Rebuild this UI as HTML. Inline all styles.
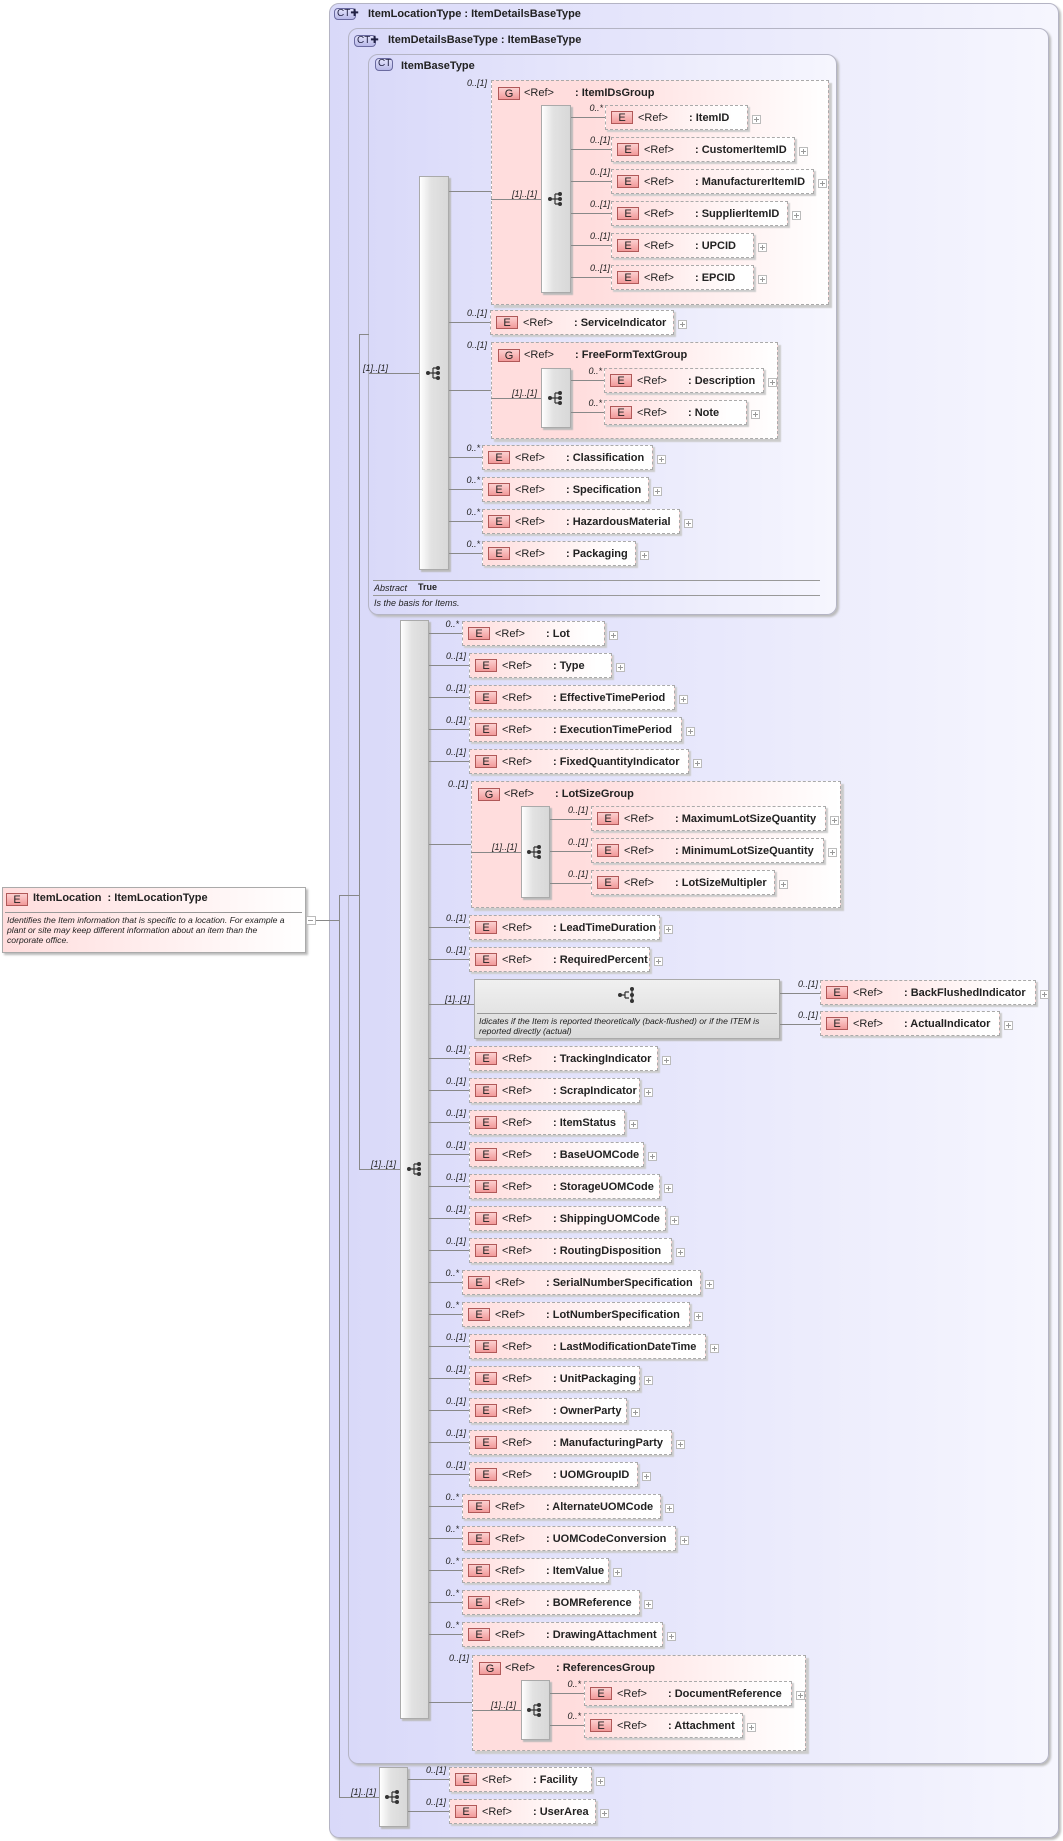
<!DOCTYPE html>
<html><head><meta charset="utf-8"><style>
*{box-sizing:border-box}
body{margin:0;width:1063px;height:1841px;background:#fff;position:relative;overflow:hidden;font-family:"Liberation Sans",sans-serif;color:#222}
div,span,b,i{position:absolute}
.bx{border:1px solid #b4b4c4;border-radius:10px;background:linear-gradient(to right,#d9d9f9,#f6f6fe);box-shadow:2px 2px 2px #bbb}
.hd{font:bold 11px "Liberation Sans",sans-serif;white-space:nowrap;color:#222}
.ct{height:12px;border:1px solid #6a6aa0;border-radius:4px;background:linear-gradient(#e4e4fc,#b8b8e8);font:10px "Liberation Sans",sans-serif;line-height:10px;padding-left:2px;color:#224}
.el{height:25px;border:1px dashed #aaa;background:linear-gradient(to right,#fdd,#fff 90%);box-shadow:2px 2px 1px #ccc;font:bold 11px "Liberation Sans",sans-serif;white-space:nowrap}
.E{left:5px;top:5px;width:22px;height:13px;border:1px solid #b05858;background:linear-gradient(#fcd0d0,#f29a9a);font:11px "Liberation Sans",sans-serif;line-height:12px;text-align:center;color:#222}
.r{left:32px;top:6px;font-weight:normal}
.n{left:83px;top:6px}
.p{right:-14px;top:9px;width:9px;height:9px;border:1px solid #bbb;background:#fff}
.p:before{content:"";position:absolute;left:1px;top:3px;width:5px;height:1px;background:#999}
.p:after{content:"";position:absolute;left:3px;top:1px;width:1px;height:5px;background:#999}
.gr{border:1px dashed #aaa;background:linear-gradient(to right,#fdd 30%,#fff);box-shadow:3px 3px 1px #ccc;font:bold 11px "Liberation Sans",sans-serif;white-space:nowrap}
.gr .E{left:6px;top:6px}
.gr .r{top:6px}
.gr .n{top:6px}
.bar{border:1px solid #aaa;background:linear-gradient(to right,#fff,#e2e2e2 40%,#d8d8d8);box-shadow:2px 2px 1px #bbb}
.m{width:34px;text-align:right;font:italic 9px "Liberation Sans",sans-serif;color:#222;white-space:nowrap}
.h{height:1px;background:#888}
.v{width:1px;background:#888}
.ic{width:16px;height:16px}
</style></head><body>

<!-- Outer boxes -->
<div class="bx" style="left:329px;top:3px;width:730px;height:1835px"></div>
<span class="ct" style="left:334px;top:8px;width:22px">CT✚</span>
<span class="hd" style="left:368px;top:8px">ItemLocationType : ItemDetailsBaseType</span>

<div class="bx" style="left:348px;top:28px;width:701px;height:1736px"></div>
<span class="ct" style="left:354px;top:35px;width:22px">CT✚</span>
<span class="hd" style="left:388px;top:34px">ItemDetailsBaseType : ItemBaseType</span>

<div class="bx" style="left:368px;top:54px;width:469px;height:561px"></div>
<span class="ct" style="left:375px;top:58px;width:18px;height:13px">CT</span>
<span class="hd" style="left:401px;top:60px">ItemBaseType</span>
<div class="h" style="left:373px;top:580px;width:447px;background:#999"></div>
<span style="left:374px;top:583px;font:italic 9px 'Liberation Sans',sans-serif">Abstract</span>
<span style="left:418px;top:582px;font:bold 9px 'Liberation Sans',sans-serif">True</span>
<div class="h" style="left:373px;top:595px;width:447px;background:#999"></div>
<span style="left:374px;top:598px;font:italic 9px 'Liberation Sans',sans-serif">Is the basis for Items.</span>

<!-- Left ItemLocation -->
<div style="left:2px;top:887px;width:304px;height:66px;border:1px solid #aaa;background:linear-gradient(to right,#fdd,#fff);box-shadow:2px 2px 2px #bbb"></div>
<b class="E" style="left:6px;top:893px">E</b>
<span class="hd" style="left:33px;top:892px">ItemLocation&nbsp; : ItemLocationType</span>
<div class="h" style="left:5px;top:912px;width:297px;background:#999"></div>
<span style="left:7px;top:915px;font:italic 8.6px/10px 'Liberation Sans',sans-serif;white-space:nowrap">Identifies the Item information that is specific to a location. For example a<br>plant or site may keep different information about an item than the<br>corporate office.</span>
<span style="left:306px;top:916px;width:10px;height:9px;border:1px solid #bbb;background:#fff"></span>
<div class="h" style="left:308px;top:920px;width:5px;background:#999"></div>

<!-- main connectors -->
<div class="h" style="left:316px;top:920px;width:24px"></div>
<div class="v" style="left:339px;top:895px;height:903px"></div>
<div class="h" style="left:339px;top:895px;width:20px"></div>
<div class="v" style="left:359px;top:334px;height:836px"></div>
<div class="h" style="left:359px;top:334px;width:10px"></div>
<div class="h" style="left:369px;top:373px;width:50px"></div>
<div class="m" style="left:354px;top:363px">[1]..[1]</div>
<div class="h" style="left:359px;top:1169px;width:41px"></div>
<div class="m" style="left:362px;top:1159px">[1]..[1]</div>
<div class="h" style="left:339px;top:1797px;width:40px"></div>
<div class="m" style="left:342px;top:1787px">[1]..[1]</div>

<svg width="0" height="0" style="position:absolute"><defs>
<g id="sq"><circle cx="2" cy="8" r="2" fill="#333"/><path d="M2 8H7M7 3V13M7 3H12M7 8H12M7 13H12" stroke="#333" stroke-width="1.2" fill="none"/><circle cx="12" cy="3" r="2" fill="#333"/><circle cx="12" cy="8" r="2" fill="#333"/><circle cx="12" cy="13" r="2" fill="#333"/></g>
<g id="ch"><circle cx="2" cy="8" r="2" fill="#333"/><path d="M2 8H7M7 5V11M7 5H11M7 11H11" stroke="#333" stroke-width="1.2" fill="none"/><circle cx="14" cy="2" r="2" fill="#333"/><circle cx="14" cy="8" r="2" fill="#333"/><circle cx="14" cy="14" r="2" fill="#333"/><path d="M14 2V14" stroke="#333" stroke-width="1.2"/></g>
</defs></svg>

<!-- Box3 main bar -->
<div class="bar" style="left:419px;top:176px;width:30px;height:394px"></div>
<svg class="ic" style="position:absolute;left:426px;top:365px" width="16" height="16"><use href="#sq"/></svg>

<!-- ItemIDsGroup -->
<div class="h" style="left:449px;top:191px;width:42px"></div>
<div class="m" style="left:453px;top:78px">0..[1]</div>
<div class="gr" style="left:491px;top:80px;width:338px;height:225px"><b class="E">G</b><span class="r">&lt;Ref&gt;</span><span class="n">: ItemIDsGroup</span></div>
<div class="h" style="left:491px;top:199px;width:50px"></div>
<div class="m" style="left:503px;top:189px">[1]..[1]</div>
<div class="bar" style="left:541px;top:105px;width:30px;height:188px"></div>
<svg class="ic" style="position:absolute;left:548px;top:191px" width="16" height="16"><use href="#sq"/></svg>

<div class="h" style="left:571px;top:117px;width:34px"></div><div class="m" style="left:569px;top:103px">0..*</div>
<div class="el" style="left:605px;top:105px;width:143px"><b class="E">E</b><span class="r">&lt;Ref&gt;</span><span class="n">: ItemID</span><i class="p"></i></div>
<div class="h" style="left:571px;top:149px;width:40px"></div><div class="m" style="left:576px;top:135px">0..[1]</div>
<div class="el" style="left:611px;top:137px;width:184px"><b class="E">E</b><span class="r">&lt;Ref&gt;</span><span class="n">: CustomerItemID</span><i class="p"></i></div>
<div class="h" style="left:571px;top:181px;width:40px"></div><div class="m" style="left:576px;top:167px">0..[1]</div>
<div class="el" style="left:611px;top:169px;width:203px"><b class="E">E</b><span class="r">&lt;Ref&gt;</span><span class="n">: ManufacturerItemID</span><i class="p"></i></div>
<div class="h" style="left:571px;top:213px;width:40px"></div><div class="m" style="left:576px;top:199px">0..[1]</div>
<div class="el" style="left:611px;top:201px;width:177px"><b class="E">E</b><span class="r">&lt;Ref&gt;</span><span class="n">: SupplierItemID</span><i class="p"></i></div>
<div class="h" style="left:571px;top:245px;width:40px"></div><div class="m" style="left:576px;top:231px">0..[1]</div>
<div class="el" style="left:611px;top:233px;width:143px"><b class="E">E</b><span class="r">&lt;Ref&gt;</span><span class="n">: UPCID</span><i class="p"></i></div>
<div class="h" style="left:571px;top:277px;width:40px"></div><div class="m" style="left:576px;top:263px">0..[1]</div>
<div class="el" style="left:611px;top:265px;width:143px"><b class="E">E</b><span class="r">&lt;Ref&gt;</span><span class="n">: EPCID</span><i class="p"></i></div>

<div class="h" style="left:449px;top:322px;width:41px"></div><div class="m" style="left:453px;top:308px">0..[1]</div>
<div class="el" style="left:490px;top:310px;width:184px"><b class="E">E</b><span class="r">&lt;Ref&gt;</span><span class="n">: ServiceIndicator</span><i class="p"></i></div>

<!-- FreeFormTextGroup -->
<div class="h" style="left:449px;top:390px;width:42px"></div>
<div class="m" style="left:453px;top:340px">0..[1]</div>
<div class="gr" style="left:491px;top:342px;width:287px;height:97px"><b class="E">G</b><span class="r">&lt;Ref&gt;</span><span class="n">: FreeFormTextGroup</span></div>
<div class="h" style="left:491px;top:398px;width:50px"></div>
<div class="m" style="left:503px;top:388px">[1]..[1]</div>
<div class="bar" style="left:541px;top:368px;width:30px;height:60px"></div>
<svg class="ic" style="position:absolute;left:548px;top:390px" width="16" height="16"><use href="#sq"/></svg>
<div class="h" style="left:571px;top:380px;width:33px"></div><div class="m" style="left:568px;top:366px">0..*</div>
<div class="el" style="left:604px;top:368px;width:160px"><b class="E">E</b><span class="r">&lt;Ref&gt;</span><span class="n">: Description</span><i class="p"></i></div>
<div class="h" style="left:571px;top:412px;width:33px"></div><div class="m" style="left:568px;top:398px">0..*</div>
<div class="el" style="left:604px;top:400px;width:143px"><b class="E">E</b><span class="r">&lt;Ref&gt;</span><span class="n">: Note</span><i class="p"></i></div>

<div class="h" style="left:449px;top:457px;width:33px"></div><div class="m" style="left:446px;top:443px">0..*</div>
<div class="el" style="left:482px;top:445px;width:171px"><b class="E">E</b><span class="r">&lt;Ref&gt;</span><span class="n">: Classification</span><i class="p"></i></div>
<div class="h" style="left:449px;top:489px;width:33px"></div><div class="m" style="left:446px;top:475px">0..*</div>
<div class="el" style="left:482px;top:477px;width:167px"><b class="E">E</b><span class="r">&lt;Ref&gt;</span><span class="n">: Specification</span><i class="p"></i></div>
<div class="h" style="left:449px;top:521px;width:33px"></div><div class="m" style="left:446px;top:507px">0..*</div>
<div class="el" style="left:482px;top:509px;width:198px"><b class="E">E</b><span class="r">&lt;Ref&gt;</span><span class="n">: HazardousMaterial</span><i class="p"></i></div>
<div class="h" style="left:449px;top:553px;width:33px"></div><div class="m" style="left:446px;top:539px">0..*</div>
<div class="el" style="left:482px;top:541px;width:154px"><b class="E">E</b><span class="r">&lt;Ref&gt;</span><span class="n">: Packaging</span><i class="p"></i></div>

<!-- Lower main bar -->
<div class="bar" style="left:400px;top:620px;width:29px;height:1099px"></div>
<svg class="ic" style="position:absolute;left:407px;top:1161px" width="16" height="16"><use href="#sq"/></svg>

<div class="h" style="left:429px;top:633px;width:33px"></div><div class="m" style="left:425px;top:619px">0..*</div>
<div class="el" style="left:462px;top:621px;width:143px"><b class="E">E</b><span class="r">&lt;Ref&gt;</span><span class="n">: Lot</span><i class="p"></i></div>
<div class="h" style="left:429px;top:665px;width:40px"></div><div class="m" style="left:432px;top:651px">0..[1]</div>
<div class="el" style="left:469px;top:653px;width:143px"><b class="E">E</b><span class="r">&lt;Ref&gt;</span><span class="n">: Type</span><i class="p"></i></div>
<div class="h" style="left:429px;top:697px;width:40px"></div><div class="m" style="left:432px;top:683px">0..[1]</div>
<div class="el" style="left:469px;top:685px;width:206px"><b class="E">E</b><span class="r">&lt;Ref&gt;</span><span class="n">: EffectiveTimePeriod</span><i class="p"></i></div>
<div class="h" style="left:429px;top:729px;width:40px"></div><div class="m" style="left:432px;top:715px">0..[1]</div>
<div class="el" style="left:469px;top:717px;width:213px"><b class="E">E</b><span class="r">&lt;Ref&gt;</span><span class="n">: ExecutionTimePeriod</span><i class="p"></i></div>
<div class="h" style="left:429px;top:761px;width:40px"></div><div class="m" style="left:432px;top:747px">0..[1]</div>
<div class="el" style="left:469px;top:749px;width:220px"><b class="E">E</b><span class="r">&lt;Ref&gt;</span><span class="n">: FixedQuantityIndicator</span><i class="p"></i></div>

<!-- LotSizeGroup -->
<div class="h" style="left:429px;top:844px;width:42px"></div>
<div class="m" style="left:434px;top:779px">0..[1]</div>
<div class="gr" style="left:471px;top:781px;width:370px;height:127px"><b class="E">G</b><span class="r">&lt;Ref&gt;</span><span class="n">: LotSizeGroup</span></div>
<div class="h" style="left:471px;top:852px;width:50px"></div>
<div class="m" style="left:483px;top:842px">[1]..[1]</div>
<div class="bar" style="left:521px;top:806px;width:29px;height:92px"></div>
<svg class="ic" style="position:absolute;left:527px;top:844px" width="16" height="16"><use href="#sq"/></svg>
<div class="h" style="left:550px;top:819px;width:41px"></div><div class="m" style="left:554px;top:805px">0..[1]</div>
<div class="el" style="left:591px;top:806px;width:235px"><b class="E">E</b><span class="r">&lt;Ref&gt;</span><span class="n">: MaximumLotSizeQuantity</span><i class="p"></i></div>
<div class="h" style="left:550px;top:851px;width:41px"></div><div class="m" style="left:554px;top:837px">0..[1]</div>
<div class="el" style="left:591px;top:838px;width:233px"><b class="E">E</b><span class="r">&lt;Ref&gt;</span><span class="n">: MinimumLotSizeQuantity</span><i class="p"></i></div>
<div class="h" style="left:550px;top:883px;width:41px"></div><div class="m" style="left:554px;top:869px">0..[1]</div>
<div class="el" style="left:591px;top:870px;width:184px"><b class="E">E</b><span class="r">&lt;Ref&gt;</span><span class="n">: LotSizeMultipler</span><i class="p"></i></div>

<div class="h" style="left:429px;top:927px;width:40px"></div><div class="m" style="left:432px;top:913px">0..[1]</div>
<div class="el" style="left:469px;top:915px;width:191px"><b class="E">E</b><span class="r">&lt;Ref&gt;</span><span class="n">: LeadTimeDuration</span><i class="p"></i></div>
<div class="h" style="left:429px;top:959px;width:40px"></div><div class="m" style="left:432px;top:945px">0..[1]</div>
<div class="el" style="left:469px;top:947px;width:181px"><b class="E">E</b><span class="r">&lt;Ref&gt;</span><span class="n">: RequiredPercent</span><i class="p"></i></div>

<!-- choice -->
<div class="h" style="left:429px;top:1004px;width:45px"></div><div class="m" style="left:436px;top:994px">[1]..[1]</div>
<div style="left:474px;top:979px;width:306px;height:60px;border:1px solid #aaa;background:linear-gradient(#f0f0f0,#dadada);box-shadow:2px 2px 1px #bbb"></div>
<svg class="ic" style="position:absolute;left:618px;top:987px" width="17" height="17"><use href="#ch"/></svg>
<div class="h" style="left:477px;top:1013px;width:300px;background:#999"></div>
<span style="left:479px;top:1016px;font:italic 8.6px/10px 'Liberation Sans',sans-serif;white-space:nowrap">Idicates if the Item is reported theoretically (back-flushed) or if the ITEM is<br>reported directly (actual)</span>
<div class="h" style="left:780px;top:993px;width:40px"></div><div class="m" style="left:784px;top:979px">0..[1]</div>
<div class="el" style="left:820px;top:980px;width:216px"><b class="E">E</b><span class="r">&lt;Ref&gt;</span><span class="n">: BackFlushedIndicator</span><i class="p"></i></div>
<div class="h" style="left:780px;top:1024px;width:40px"></div><div class="m" style="left:784px;top:1010px">0..[1]</div>
<div class="el" style="left:820px;top:1011px;width:180px"><b class="E">E</b><span class="r">&lt;Ref&gt;</span><span class="n">: ActualIndicator</span><i class="p"></i></div>

<div class="h" style="left:429px;top:1058px;width:40px"></div><div class="m" style="left:432px;top:1044px">0..[1]</div>
<div class="el" style="left:469px;top:1046px;width:189px"><b class="E">E</b><span class="r">&lt;Ref&gt;</span><span class="n">: TrackingIndicator</span><i class="p"></i></div>
<div class="h" style="left:429px;top:1090px;width:40px"></div><div class="m" style="left:432px;top:1076px">0..[1]</div>
<div class="el" style="left:469px;top:1078px;width:171px"><b class="E">E</b><span class="r">&lt;Ref&gt;</span><span class="n">: ScrapIndicator</span><i class="p"></i></div>
<div class="h" style="left:429px;top:1122px;width:40px"></div><div class="m" style="left:432px;top:1108px">0..[1]</div>
<div class="el" style="left:469px;top:1110px;width:156px"><b class="E">E</b><span class="r">&lt;Ref&gt;</span><span class="n">: ItemStatus</span><i class="p"></i></div>
<div class="h" style="left:429px;top:1154px;width:40px"></div><div class="m" style="left:432px;top:1140px">0..[1]</div>
<div class="el" style="left:469px;top:1142px;width:175px"><b class="E">E</b><span class="r">&lt;Ref&gt;</span><span class="n">: BaseUOMCode</span><i class="p"></i></div>
<div class="h" style="left:429px;top:1186px;width:40px"></div><div class="m" style="left:432px;top:1172px">0..[1]</div>
<div class="el" style="left:469px;top:1174px;width:191px"><b class="E">E</b><span class="r">&lt;Ref&gt;</span><span class="n">: StorageUOMCode</span><i class="p"></i></div>
<div class="h" style="left:429px;top:1218px;width:40px"></div><div class="m" style="left:432px;top:1204px">0..[1]</div>
<div class="el" style="left:469px;top:1206px;width:197px"><b class="E">E</b><span class="r">&lt;Ref&gt;</span><span class="n">: ShippingUOMCode</span><i class="p"></i></div>
<div class="h" style="left:429px;top:1250px;width:40px"></div><div class="m" style="left:432px;top:1236px">0..[1]</div>
<div class="el" style="left:469px;top:1238px;width:203px"><b class="E">E</b><span class="r">&lt;Ref&gt;</span><span class="n">: RoutingDisposition</span><i class="p"></i></div>
<div class="h" style="left:429px;top:1282px;width:33px"></div><div class="m" style="left:425px;top:1268px">0..*</div>
<div class="el" style="left:462px;top:1270px;width:239px"><b class="E">E</b><span class="r">&lt;Ref&gt;</span><span class="n">: SerialNumberSpecification</span><i class="p"></i></div>
<div class="h" style="left:429px;top:1314px;width:33px"></div><div class="m" style="left:425px;top:1300px">0..*</div>
<div class="el" style="left:462px;top:1302px;width:228px"><b class="E">E</b><span class="r">&lt;Ref&gt;</span><span class="n">: LotNumberSpecification</span><i class="p"></i></div>
<div class="h" style="left:429px;top:1346px;width:40px"></div><div class="m" style="left:432px;top:1332px">0..[1]</div>
<div class="el" style="left:469px;top:1334px;width:237px"><b class="E">E</b><span class="r">&lt;Ref&gt;</span><span class="n">: LastModificationDateTime</span><i class="p"></i></div>
<div class="h" style="left:429px;top:1378px;width:40px"></div><div class="m" style="left:432px;top:1364px">0..[1]</div>
<div class="el" style="left:469px;top:1366px;width:171px"><b class="E">E</b><span class="r">&lt;Ref&gt;</span><span class="n">: UnitPackaging</span><i class="p"></i></div>
<div class="h" style="left:429px;top:1410px;width:40px"></div><div class="m" style="left:432px;top:1396px">0..[1]</div>
<div class="el" style="left:469px;top:1398px;width:158px"><b class="E">E</b><span class="r">&lt;Ref&gt;</span><span class="n">: OwnerParty</span><i class="p"></i></div>
<div class="h" style="left:429px;top:1442px;width:40px"></div><div class="m" style="left:432px;top:1428px">0..[1]</div>
<div class="el" style="left:469px;top:1430px;width:203px"><b class="E">E</b><span class="r">&lt;Ref&gt;</span><span class="n">: ManufacturingParty</span><i class="p"></i></div>
<div class="h" style="left:429px;top:1474px;width:40px"></div><div class="m" style="left:432px;top:1460px">0..[1]</div>
<div class="el" style="left:469px;top:1462px;width:169px"><b class="E">E</b><span class="r">&lt;Ref&gt;</span><span class="n">: UOMGroupID</span><i class="p"></i></div>
<div class="h" style="left:429px;top:1506px;width:33px"></div><div class="m" style="left:425px;top:1492px">0..*</div>
<div class="el" style="left:462px;top:1494px;width:199px"><b class="E">E</b><span class="r">&lt;Ref&gt;</span><span class="n">: AlternateUOMCode</span><i class="p"></i></div>
<div class="h" style="left:429px;top:1538px;width:33px"></div><div class="m" style="left:425px;top:1524px">0..*</div>
<div class="el" style="left:462px;top:1526px;width:214px"><b class="E">E</b><span class="r">&lt;Ref&gt;</span><span class="n">: UOMCodeConversion</span><i class="p"></i></div>
<div class="h" style="left:429px;top:1570px;width:33px"></div><div class="m" style="left:425px;top:1556px">0..*</div>
<div class="el" style="left:462px;top:1558px;width:147px"><b class="E">E</b><span class="r">&lt;Ref&gt;</span><span class="n">: ItemValue</span><i class="p"></i></div>
<div class="h" style="left:429px;top:1602px;width:33px"></div><div class="m" style="left:425px;top:1588px">0..*</div>
<div class="el" style="left:462px;top:1590px;width:178px"><b class="E">E</b><span class="r">&lt;Ref&gt;</span><span class="n">: BOMReference</span><i class="p"></i></div>
<div class="h" style="left:429px;top:1634px;width:33px"></div><div class="m" style="left:425px;top:1620px">0..*</div>
<div class="el" style="left:462px;top:1622px;width:201px"><b class="E">E</b><span class="r">&lt;Ref&gt;</span><span class="n">: DrawingAttachment</span><i class="p"></i></div>

<!-- ReferencesGroup -->
<div class="h" style="left:429px;top:1702px;width:43px"></div>
<div class="m" style="left:435px;top:1653px">0..[1]</div>
<div class="gr" style="left:472px;top:1655px;width:334px;height:96px"><b class="E">G</b><span class="r">&lt;Ref&gt;</span><span class="n">: ReferencesGroup</span></div>
<div class="h" style="left:472px;top:1710px;width:49px"></div>
<div class="m" style="left:482px;top:1700px">[1]..[1]</div>
<div class="bar" style="left:521px;top:1680px;width:29px;height:60px"></div>
<svg class="ic" style="position:absolute;left:527px;top:1702px" width="16" height="16"><use href="#sq"/></svg>
<div class="h" style="left:550px;top:1693px;width:34px"></div><div class="m" style="left:547px;top:1679px">0..*</div>
<div class="el" style="left:584px;top:1681px;width:208px"><b class="E">E</b><span class="r">&lt;Ref&gt;</span><span class="n">: DocumentReference</span><i class="p"></i></div>
<div class="h" style="left:550px;top:1725px;width:34px"></div><div class="m" style="left:547px;top:1711px">0..*</div>
<div class="el" style="left:584px;top:1713px;width:159px"><b class="E">E</b><span class="r">&lt;Ref&gt;</span><span class="n">: Attachment</span><i class="p"></i></div>

<!-- bottom sequence -->
<div class="bar" style="left:379px;top:1767px;width:29px;height:60px"></div>
<svg class="ic" style="position:absolute;left:385px;top:1789px" width="16" height="16"><use href="#sq"/></svg>
<div class="h" style="left:408px;top:1779px;width:41px"></div><div class="m" style="left:412px;top:1765px">0..[1]</div>
<div class="el" style="left:449px;top:1767px;width:143px"><b class="E">E</b><span class="r">&lt;Ref&gt;</span><span class="n">: Facility</span><i class="p"></i></div>
<div class="h" style="left:408px;top:1811px;width:41px"></div><div class="m" style="left:412px;top:1797px">0..[1]</div>
<div class="el" style="left:449px;top:1799px;width:147px"><b class="E">E</b><span class="r">&lt;Ref&gt;</span><span class="n">: UserArea</span><i class="p"></i></div>

</body></html>
